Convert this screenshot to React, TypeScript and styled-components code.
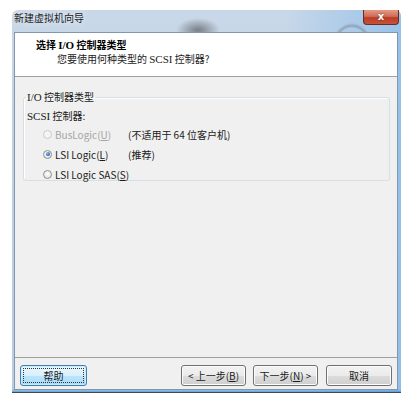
import React from "react";
import styled, { createGlobalStyle } from "styled-components";

const Global = createGlobalStyle`
  html, body { margin: 0; padding: 0; background: #ffffff; }
  body { font-family: "Noto Sans CJK SC", "Noto Sans", sans-serif; font-size: 10px; color: #1a1a1a; }
  * { box-sizing: border-box; }
`;

const Page = styled.div`
  width: 416px;
  height: 408px;
  padding: 10px 0 0 12px;
`;

const Window = styled.div`
  width: 389px;
  height: 383px;
  display: flex;
  flex-direction: column;
  padding: 0 3px 2px 2px;
  border-radius: 6px 6px 0 0;
  border-bottom: 1px solid #404a55;
  background:
    radial-gradient(ellipse 22px 12px at 186px 20px, rgba(55, 55, 55, 0.55), rgba(55, 55, 55, 0) 100%),
    radial-gradient(circle at 340px 32px, rgba(90, 90, 90, 0) 14px, rgba(90, 90, 90, 0.35) 16px, rgba(90, 90, 90, 0) 19px),
    linear-gradient(to top, rgba(70, 150, 225, 0.8) 0px, rgba(70, 150, 225, 0) 3px),
    linear-gradient(to right, rgba(150, 190, 230, 0) 70%, rgba(120, 180, 235, 0.6) 100%),
    linear-gradient(to bottom, #c9d8e8 0%, #bfd2e6 30%, #b7cde4 100%);
`;

const TitleBar = styled.div`
  height: 22px;
  display: flex;
  align-items: flex-start;
  justify-content: space-between;
`;

const TitleText = styled.div`
  padding-top: 2px;
  line-height: 12px;
  font-size: 10px;
  color: #1c1c1c;
  text-shadow: 0 0 6px rgba(255, 255, 255, 0.9);
`;

const CloseButton = styled.div`
  width: 36px;
  height: 15px;
  margin-right: -1px;
  border: 1px solid #6d2b22;
  border-top: none;
  border-radius: 0 0 4px 4px;
  background: linear-gradient(to bottom, #e49a86 0%, #d26d57 45%, #b93d25 55%, #c6533a 100%);
  display: flex;
  align-items: center;
  justify-content: center;
  color: #ffffff;
  font-family: "DejaVu Sans", sans-serif;
  font-weight: bold;
  font-size: 10px;
  line-height: 1;
  text-shadow: 0 0 2px #6d2b22;
`;

const Client = styled.div`
  flex: 1;
  display: flex;
  flex-direction: column;
  border: 1px solid #8496ab;
  background: #f0f0f0;
`;

const Header = styled.div`
  height: 44px;
  background: #ffffff;
  border-bottom: 1px solid #a0a0a0;
  padding: 5px 0 0 21px;
`;

const HeaderTitle = styled.div`
  font-weight: bold;
  line-height: 13px;
  color: #000;
`;

const HeaderSub = styled.div`
  line-height: 13px;
  padding-left: 21px;
  color: #1a1a1a;
`;

const Serif = styled.span<{ $bold?: boolean }>`
  font-family: "Liberation Serif", "DejaVu Serif", serif;
  font-size: 11px;
  font-weight: ${(p) => (p.$bold ? "bold" : "normal")};
`;

const Body = styled.div`
  flex: 1;
  padding: 13px 7px 0 8px;
`;

const GroupBox = styled.fieldset`
  margin: 0;
  height: 91px;
  padding: 0 0 0 3px;
  border: 1px solid #d5dfe5;
  border-radius: 3px;
  box-shadow: inset 1px 1px 0 #ffffff;
`;

const Legend = styled.legend`
  padding: 0 1px;
  margin-left: -1px;
  line-height: 13px;
`;

const FieldLabel = styled.div`
  margin-top: 5px;
  line-height: 13px;
`;

const Options = styled.div`
  display: grid;
  grid-template-columns: 85px auto;
  grid-auto-rows: 20px;
  align-items: center;
  padding: 1px 0 0 16px;
`;

const OptionLabel = styled.div<{ $disabled?: boolean }>`
  display: flex;
  align-items: center;
  gap: 3px;
  white-space: nowrap;
  color: ${(p) => (p.$disabled ? "#a5a5a5" : "#1a1a1a")};
`;

const OptionText = styled.span`
  white-space: nowrap;
`;

const Radio = styled.span<{ $checked?: boolean; $disabled?: boolean }>`
  flex: none;
  width: 9px;
  height: 9px;
  border-radius: 50%;
  border: 1px solid ${(p) => (p.$disabled ? "#cacaca" : "#8e8f8f")};
  background: ${(p) =>
    p.$disabled
      ? "#f4f4f4"
      : "radial-gradient(circle at 50% 40%, #ffffff 0%, #e8e8e8 60%, #d0d0d0 100%)"};
  display: flex;
  align-items: center;
  justify-content: center;
  &::after {
    content: "";
    display: ${(p) => (p.$checked ? "block" : "none")};
    width: 4px;
    height: 4px;
    border-radius: 50%;
    background: radial-gradient(circle at 40% 35%, #8fc3f4 0%, #2a6bc0 60%, #1b4f95 100%);
  }
`;

const Note = styled.div`
  color: #1a1a1a;
  white-space: nowrap;
`;

const Footer = styled.div`
  height: 32px;
  border-top: 1px solid #a0a0a0;
  display: flex;
  align-items: flex-start;
  padding: 7px 5px 0 5px;
`;

const Spacer = styled.div`
  flex: 1;
`;

const Button = styled.button<{ $default?: boolean; $w: number; $gap?: number }>`
  position: relative;
  width: ${(p) => p.$w}px;
  height: 21px;
  margin-left: ${(p) => p.$gap ?? 0}px;
  padding: 0;
  font-family: "Noto Sans CJK SC", "Noto Sans", sans-serif;
  font-size: 10px;
  color: #1a1a1a;
  white-space: nowrap;
  border-radius: 3px;
  border: 1px solid ${(p) => (p.$default ? "#3c7fb1" : "#707070")};
  background: ${(p) =>
    p.$default
      ? "linear-gradient(to bottom, #eaf6fd 0%, #d9f0fc 50%, #bee6fd 50%, #a7d9f5 100%)"
      : "linear-gradient(to bottom, #f2f2f2 0%, #ebebeb 50%, #dddddd 50%, #cfcfcf 100%)"};
  box-shadow: inset 0 0 0 1px ${(p) => (p.$default ? "#c8ecfc" : "#fcfcfc")};
  &::after {
    content: "";
    display: ${(p) => (p.$default ? "block" : "none")};
    position: absolute;
    inset: 2px;
    border: 1px dotted #333;
  }
`;

const Key = styled.u``;

export default function App() {
  return (
    <>
      <Global />
      <Page>
        <Window>
          <TitleBar>
            <TitleText>新建虚拟机向导</TitleText>
            <CloseButton>x</CloseButton>
          </TitleBar>
          <Client>
            <Header>
              <HeaderTitle>
                选择 <Serif $bold>I/O</Serif> 控制器类型
              </HeaderTitle>
              <HeaderSub>
                您要使用何种类型的 <Serif>SCSI</Serif> 控制器?
              </HeaderSub>
            </Header>
            <Body>
              <GroupBox>
                <Legend>
                  <Serif>I/O</Serif> 控制器类型
                </Legend>
                <FieldLabel>
                  <Serif>SCSI</Serif> 控制器:
                </FieldLabel>
                <Options>
                  <OptionLabel $disabled>
                    <Radio $disabled />
                    <OptionText>
                      BusLogic(<Key>U</Key>)
                    </OptionText>
                  </OptionLabel>
                  <Note>(不适用于 64 位客户机)</Note>
                  <OptionLabel>
                    <Radio $checked />
                    <OptionText>
                      LSI Logic(<Key>L</Key>)
                    </OptionText>
                  </OptionLabel>
                  <Note>(推荐)</Note>
                  <OptionLabel>
                    <Radio />
                    <OptionText>
                      LSI Logic SAS(<Key>S</Key>)
                    </OptionText>
                  </OptionLabel>
                </Options>
              </GroupBox>
            </Body>
            <Footer>
              <Button $default $w={67}>帮助</Button>
              <Spacer />
              <Button $w={65}>&lt; 上一步(<Key>B</Key>)</Button>
              <Button $w={65} $gap={7}>下一步(<Key>N</Key>) &gt;</Button>
              <Button $w={66} $gap={8}>取消</Button>
            </Footer>
          </Client>
        </Window>
      </Page>
    </>
  );
}
